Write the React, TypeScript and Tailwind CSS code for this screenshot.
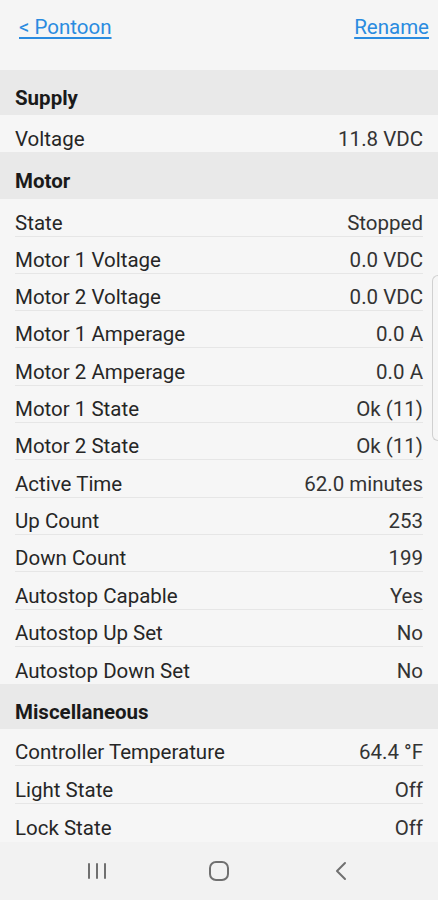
import React from "react";

type Row = { label: string; value: string };
type Section = { title: string; rows: Row[]; band: string };

const sections: Section[] = [
  { title: "Supply", band: "h-[45px]", rows: [{ label: "Voltage", value: "11.8 VDC" }] },
  {
    title: "Motor",
    band: "h-[47px]",
    rows: [
      { label: "State", value: "Stopped" },
      { label: "Motor 1 Voltage", value: "0.0 VDC" },
      { label: "Motor 2 Voltage", value: "0.0 VDC" },
      { label: "Motor 1 Amperage", value: "0.0 A" },
      { label: "Motor 2 Amperage", value: "0.0 A" },
      { label: "Motor 1 State", value: "Ok (11)" },
      { label: "Motor 2 State", value: "Ok (11)" },
      { label: "Active Time", value: "62.0 minutes" },
      { label: "Up Count", value: "253" },
      { label: "Down Count", value: "199" },
      { label: "Autostop Capable", value: "Yes" },
      { label: "Autostop Up Set", value: "No" },
      { label: "Autostop Down Set", value: "No" },
    ],
  },
  {
    title: "Miscellaneous",
    band: "h-[45px]",
    rows: [
      { label: "Controller Temperature", value: "64.4 °F" },
      { label: "Light State", value: "Off" },
      { label: "Lock State", value: "Off" },
    ],
  },
];

function SectionBlock({ section }: { section: Section }) {
  return (
    <div>
      <div
        className={`${section.band} flex items-center px-[15px] pt-[12px] bg-[#e9e9e9] text-[20.5px] font-bold text-[#1a1a1a]`}
      >
        {section.title}
      </div>
      {section.rows.map((row, i) => (
        <div key={row.label} className="px-[15px] bg-[#f6f6f6]">
          <div
            className={`h-[37.3px] flex items-center justify-between pt-[11px] text-[20.5px] ${
              i < section.rows.length - 1 ? "border-b border-[#e6e6e6]" : ""
            }`}
          >
            <span className="text-[#262626]">{row.label}</span>
            <span className="text-[#333333]">{row.value}</span>
          </div>
        </div>
      ))}
    </div>
  );
}

export default function App() {
  return (
    <div
      className="relative w-[438px] h-[900px] bg-[#f6f6f6] flex flex-col overflow-hidden"
      style={{ fontFamily: "Roboto, 'Noto Sans', sans-serif" }}
    >
      <div className="h-[70px] flex items-start justify-between px-[19px] pt-[12px] bg-[#f5f5f5]">
        <a className="text-[20.5px] text-[#2a8be0] underline underline-offset-[3px]">
          &lt; Pontoon
        </a>
        <a className="text-[20.5px] text-[#2a8be0] underline underline-offset-[3px] mr-[-10px]">
          Rename
        </a>
      </div>

      <div className="flex-1">
        {sections.map((s) => (
          <SectionBlock key={s.title} section={s} />
        ))}
      </div>

      <div className="h-[58px] bg-[#f2f2f2] flex items-center justify-center">
        <div className="w-[122px] flex justify-center">
          <svg width="22" height="20" viewBox="0 0 22 20">
            <g stroke="#707070" strokeWidth="2" strokeLinecap="round">
              <line x1="3" y1="3" x2="3" y2="17" />
              <line x1="11" y1="3" x2="11" y2="17" />
              <line x1="19" y1="3" x2="19" y2="17" />
            </g>
          </svg>
        </div>
        <div className="w-[122px] flex justify-center">
          <svg width="24" height="24" viewBox="0 0 24 24">
            <rect x="3" y="3" width="18" height="18" rx="6" fill="none" stroke="#707070" strokeWidth="2" />
          </svg>
        </div>
        <div className="w-[122px] flex justify-center">
          <svg width="22" height="22" viewBox="0 0 22 22">
            <polyline points="15,3 7,11 15,19" fill="none" stroke="#707070" strokeWidth="2" strokeLinecap="round" strokeLinejoin="round" />
          </svg>
        </div>
      </div>

      <div className="absolute right-0 top-[275px] w-[6px] h-[166px] border-l border-y border-[#d0d0d0] rounded-l-[6px]" />
    </div>
  );
}
